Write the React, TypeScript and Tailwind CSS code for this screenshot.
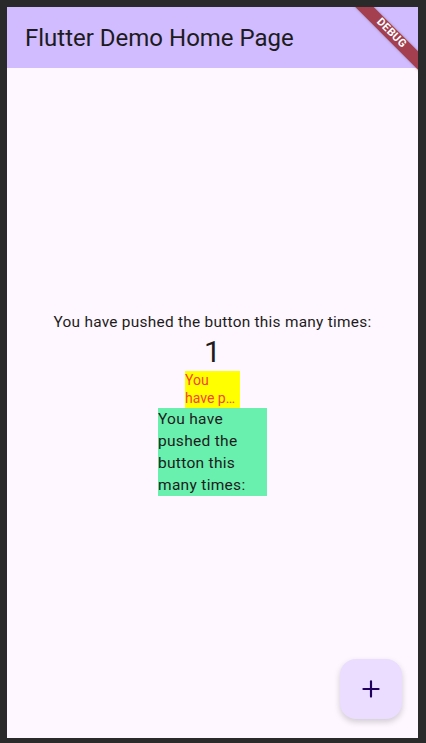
import { Plus } from "lucide-react";

const font = { fontFamily: "Roboto, 'Noto Sans', sans-serif" };

const DebugBanner = () => {
  return (
    <div className="pointer-events-none absolute right-0 top-0 h-[80px] w-[80px] overflow-hidden">
      <div className="absolute left-[-7px] top-[19.5px] flex h-[13px] w-[120px] rotate-45 items-center justify-center bg-[#a33f4f] text-[11px] font-bold tracking-[0.3px] text-white shadow-[0_0_3px_rgba(0,0,0,0.25)]">
        DEBUG
      </div>
    </div>
  );
};

export default function App() {
  return (
    <div className="h-[743px] w-[426px] bg-[#2a2a2a] pl-[7px] pr-[8px] pt-[7px] pb-[5px]" style={font}>
      <div className="relative flex h-full flex-col bg-[#fef7ff]">
        <header className="flex h-[61px] shrink-0 items-center bg-[#d0bcff] pl-[18px]">
          <h1 className="text-[24px] font-normal text-[#1d1b20]">Flutter Demo Home Page</h1>
        </header>
        <DebugBanner />

        <main className="flex flex-1 flex-col items-center justify-center pt-[1px]">
          <p className="text-[15.4px] leading-[20px] tracking-[0.27px] text-[#1d1b20]">
            You have pushed the button this many times:
          </p>
          <p className="text-[30px] leading-[39px] text-[#1d1b20]">1</p>
          <div className="w-[55px] bg-[#ffff00] text-[14px] leading-[18.5px] text-[#f44336]">
            <p>You</p>
            <p className="whitespace-nowrap">have p…</p>
          </div>
          <div className="w-[109px] bg-[#69f0ae] text-[15.5px] leading-[22px] tracking-[0.3px] text-[#1d1b20]">
            You have pushed the button this many times:
          </div>
        </main>

        <button className="absolute bottom-[19px] right-[16px] flex h-[60px] w-[62px] items-center justify-center rounded-[16px] bg-[#eaddff] text-[#21005d] shadow-[0_3px_6px_rgba(0,0,0,0.18)]">
          <Plus size={26} strokeWidth={2} />
        </button>
      </div>
    </div>
  );
}
